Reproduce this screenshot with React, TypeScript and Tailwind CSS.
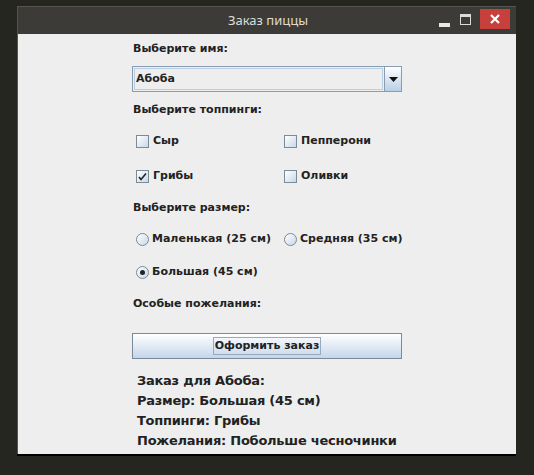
import React, { useState } from 'react';

const toppings = [
  { name: 'Сыр', checked: false },
  { name: 'Пепперони', checked: false },
  { name: 'Грибы', checked: true },
  { name: 'Оливки', checked: false },
];

const sizes = ['Маленькая (25 см)', 'Средняя (35 см)', 'Большая (45 см)'];

function CheckBox({ checked }: { checked: boolean }) {
  return (
    <span className="shrink-0 w-[13px] h-[13px] border border-[#7a8a99] bg-gradient-to-br from-white to-[#c8d8e8] flex items-center justify-center">
      {checked && (
        <svg width="9" height="9" viewBox="0 0 9 9">
          <path d="M1 5 L3 7.5 L8 1.5" stroke="#222" strokeWidth="1.6" fill="none" />
        </svg>
      )}
    </span>
  );
}

function Radio({ selected }: { selected: boolean }) {
  return (
    <span className="shrink-0 w-[13px] h-[13px] rounded-full border border-[#7a8a99] bg-gradient-to-br from-white to-[#c8d8e8] flex items-center justify-center">
      {selected && <span className="w-[5px] h-[5px] rounded-full bg-[#222]" />}
    </span>
  );
}

export default function App() {
  const [size] = useState(2);

  return (
    <div className="w-[534px] h-[475px] bg-[#262621] pt-[6px] pl-[17px]" style={{ fontFamily: '"DejaVu Sans", sans-serif' }}>
      <div className="w-[499px] h-[450px] flex flex-col border-b-2 border-black">
        {/* Title bar */}
        <div className="shrink-0 h-[28px] bg-[#3c3b37] border-t border-l border-[#55554f] flex items-center relative">
          <div className="flex-1 text-center text-[13px] text-[#dfdbd2] pl-[2px]" style={{ fontFamily: '"Noto Sans", sans-serif' }}>
            Заказ пиццы
          </div>
          <div className="absolute right-[6px] top-[2px] flex items-center gap-[7px]">
            <span className="w-[11px] h-[4px] bg-[#e8e8e8] mt-[11px]" />
            <span className="w-[11px] h-[11px] border-[1.5px] border-[#dcdcdc] border-t-[3px] ml-[3px]" />
            <span className="w-[30px] h-[20px] bg-[#c7403c] flex items-center justify-center ml-[2px]">
              <svg width="10" height="10" viewBox="0 0 10 10">
                <path d="M1 1 L9 9 M9 1 L1 9" stroke="white" strokeWidth="2.2" />
              </svg>
            </span>
          </div>
        </div>

        {/* Content */}
        <div className="flex-1 overflow-hidden bg-[#eeeeee] border-l border-[#55554f] pl-[114px] text-[#222]">
          <div className="w-[270px] text-[11px] font-bold">
            <div className="mt-[6px] h-[18px] flex items-center pl-[1px]">Выберите имя:</div>

            <div className="mt-[8px] h-[26px] border border-[#8a9cb0] flex">
              <div className="flex-1 border border-[#b8cfe5] m-[1px] flex items-center pl-[1px]">
                Абоба
              </div>
              <div className="w-[17px] border-l border-[#8a9cb0] bg-gradient-to-b from-white to-[#b8cfe5] flex items-center justify-center">
                <svg width="9" height="5" viewBox="0 0 9 5">
                  <path d="M0 0 L9 0 L4.5 5 Z" fill="#111" />
                </svg>
              </div>
            </div>

            <div className="mt-[9px] h-[18px] flex items-center pl-[1px]">Выберите топпинги:</div>

            <div className="grid grid-cols-[148px_1fr] mt-[10px] gap-y-[11px]">
              {toppings.map((t) => (
                <div key={t.name} className="h-[24px] flex items-center gap-[4px] pl-[4px]">
                  <CheckBox checked={t.checked} />
                  <span>{t.name}</span>
                </div>
              ))}
            </div>

            <div className="mt-[11px] h-[18px] flex items-center pl-[1px]">Выберите размер:</div>

            <div className="grid grid-cols-[148px_1fr] mt-[10px] gap-y-[9px]">
              {sizes.map((s, i) => (
                <div key={s} className="h-[24px] flex items-center gap-[3px] pl-[4px] whitespace-nowrap">
                  <Radio selected={i === size} />
                  <span>{s}</span>
                </div>
              ))}
            </div>

            <div className="mt-[11px] h-[18px] flex items-center pl-[1px]">Особые пожелания:</div>

            <button className="mt-[20px] w-full h-[26px] border border-[#7a8a99] bg-gradient-to-b from-white to-[#c4d6ea] flex items-center justify-center">
              <span className="border border-[#99aabb] px-[1px] leading-[16px]">Оформить заказ</span>
            </button>

            <div className="mt-[12px] pl-[5px] text-[13px] leading-[20px] tracking-[-0.25px] whitespace-nowrap">
              <div>Заказ для Абоба:</div>
              <div>Размер: Большая (45 см)</div>
              <div>Топпинги: Грибы</div>
              <div>Пожелания: Побольше чесночинки</div>
            </div>
          </div>
        </div>
      </div>
    </div>
  );
}
